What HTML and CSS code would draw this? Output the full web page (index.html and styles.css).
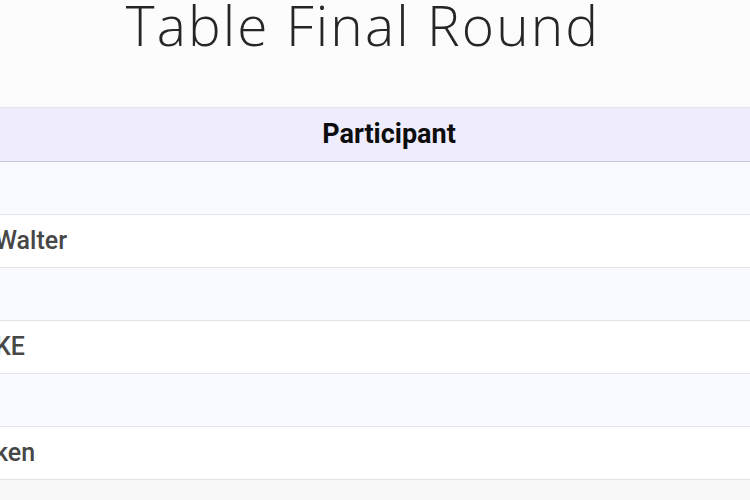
FILE: index.html
```html
<!DOCTYPE html>
<html lang="en">
<head>
<meta charset="utf-8">
<title>Table Final Round</title>
<link rel="stylesheet" href="styles.css">
</head>
<body>
<main class="page">
  <h1 class="title">Table Final Round</h1>
  <div class="table-wrap">
    <table class="results">
      <thead>
        <tr><th>Participant</th></tr>
      </thead>
      <tbody>
        <tr><td></td></tr>
        <tr><td>Walter</td></tr>
        <tr><td></td></tr>
        <tr><td>KE</td></tr>
        <tr><td></td></tr>
        <tr><td>ken</td></tr>
        <tr><td></td></tr>
      </tbody>
    </table>
  </div>
</main>
</body>
</html>
```
FILE: styles.css
```css
html, body {
  margin: 0;
  padding: 0;
  background: #fcfcfc;
  overflow: hidden;
}

.page {
  width: 750px;
  height: 500px;
  overflow: hidden;
}

.title {
  margin: 0 0 57px 0;
  padding-right: 24px;
  font-family: "Open Sans", "Noto Sans", sans-serif;
  font-weight: 300;
  font-size: 55px;
  letter-spacing: 2.1px;
  line-height: 0.9;
  color: #262626;
  text-align: center;
}

.table-wrap {
  margin-left: -30px;
  width: 838px;
}

.results {
  width: 100%;
  border-collapse: collapse;
  font-family: Roboto, "Liberation Sans", sans-serif;
}

.results th {
  height: 53px;
  padding: 0;
  background: #efedfd;
  border-top: 1px solid #e6e5ee;
  border-bottom: 1px solid #c9c7da;
  font-size: 27px;
  font-weight: 700;
  color: #0d0d0d;
  text-align: center;
  vertical-align: middle;
}

.results td {
  height: 52px;
  padding: 0 0 0 25px;
  border-bottom: 1px solid #e3e3e8;
  font-size: 25px;
  font-weight: 500;
  color: #474747;
  text-align: left;
  vertical-align: middle;
}

.results tbody tr:nth-child(odd) td {
  background: #f9faff;
}

.results tbody tr:nth-child(even) td {
  background: #ffffff;
}

.results tbody tr:last-child td {
  background: #f8f8f9;
}
```
